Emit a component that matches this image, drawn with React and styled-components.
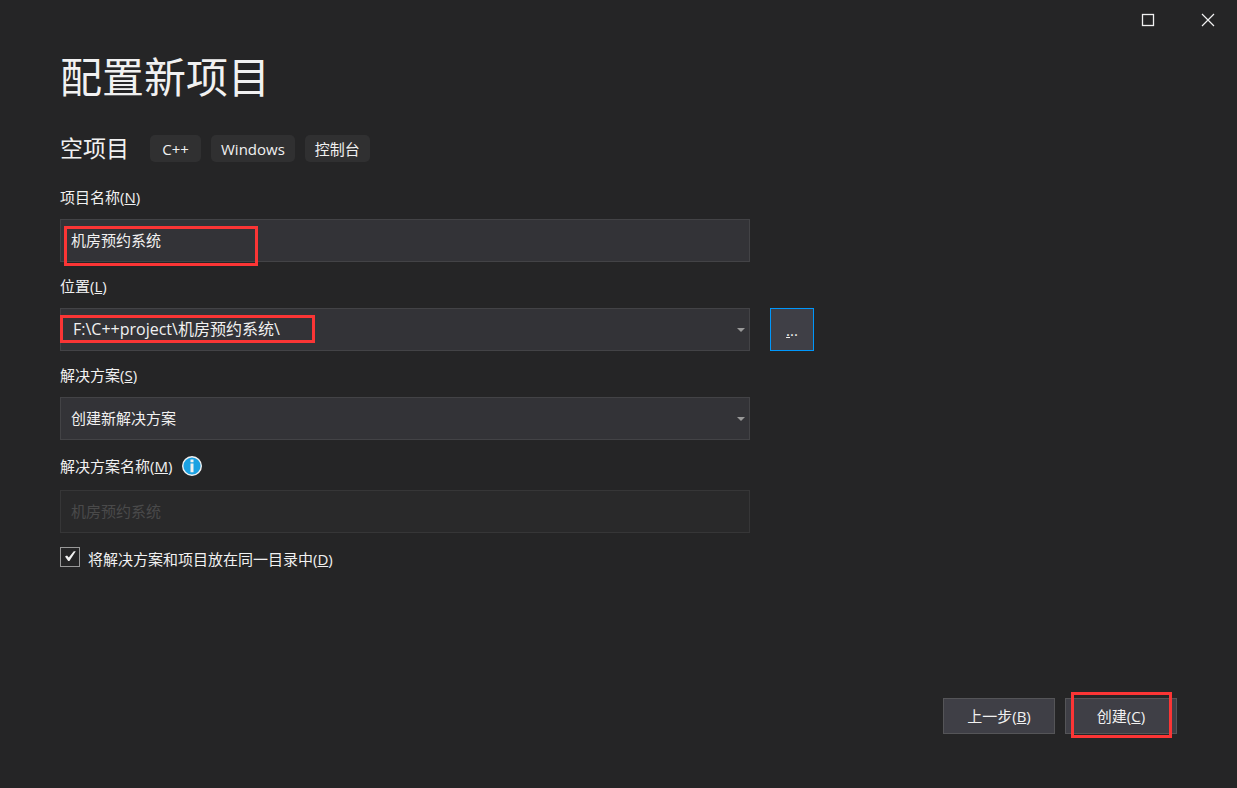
import React from "react";
import styled, { createGlobalStyle } from "styled-components";

const Global = createGlobalStyle`
  *, *::before, *::after { box-sizing: border-box; }
  body {
    margin: 0;
    background: #252526;
    color: #f1f1f1;
    font-family: "Open Sans", "Noto Sans CJK SC", sans-serif;
    font-size: 15px;
    line-height: 20px;
  }
  button, input, select { font: inherit; color: inherit; margin: 0; }
`;

const Dialog = styled.div`
  min-height: 100vh;
  display: flex;
  flex-direction: column;
`;

const TitleBar = styled.header`
  display: flex;
  justify-content: flex-end;
  height: 40px;
`;

const WindowButton = styled.button`
  display: grid;
  place-items: center;
  width: 60px;
  padding: 0 0 0 2px;
  border: 0;
  background: none;
`;

const Content = styled.main`
  flex: 1;
  padding: 6px 60px 0;
`;

const Title = styled.h1`
  margin: 0;
  font-size: 42px;
  line-height: 62px;
  font-weight: 400;
`;

const Template = styled.div`
  display: flex;
  align-items: center;
  gap: 10px;
  margin-top: 23px;
`;

const TemplateName = styled.h2`
  margin: 0 11px 0 0;
  font-size: 23px;
  line-height: 34px;
  font-weight: 400;
`;

const Tag = styled.span`
  min-width: 51px;
  padding: 4px 10px 3px;
  border-radius: 5px;
  background: #303031;
  text-align: center;
`;

const Form = styled.form`
  display: flex;
  flex-direction: column;
  margin-top: 22px;
`;

const Field = styled.div`
  display: flex;
  flex-direction: column;
  gap: 12px;
  margin-bottom: 14px;
`;

const LabelRow = styled.div`
  display: flex;
  align-items: center;
  gap: 10px;
  height: 24px;
`;

const Controls = styled.div`
  display: flex;
  gap: 20px;
`;

const Box = styled.div`
  position: relative;
  flex: 0 1 690px;
`;

const TextInput = styled.input`
  display: block;
  width: 100%;
  height: 43px;
  padding: 0 10px 2px;
  border: 1px solid #434346;
  border-radius: 0;
  background: #333337;
  &:disabled {
    border-color: #363637;
    background: #29292a;
    color: #4a4a4a;
  }
`;

const Select = styled.select`
  display: block;
  width: 100%;
  height: 43px;
  padding: 0 30px 2px ${(p) => (p.$path ? 12 : 10)}px;
  border: 1px solid #434346;
  border-radius: 0;
  background: #333337;
  font-size: ${(p) => (p.$path ? 16 : 15)}px;
  appearance: none;
`;

const Arrow = styled.svg`
  position: absolute;
  top: 20px;
  right: 5px;
  pointer-events: none;
`;

const Button = styled.button`
  width: ${(p) => p.$width}px;
  height: ${(p) => p.$height}px;
  padding: 0;
  border: 1px solid ${(p) => (p.$focused ? "#0097fb" : "#555558")};
  background: #3f3f46;
`;

const CheckRow = styled.div`
  display: flex;
  align-items: center;
  gap: 8px;
`;

const CheckBoxWrap = styled.span`
  position: relative;
  display: flex;
  margin-bottom: 4px;
  input:not(:checked) + svg { display: none; }
`;

const Checkbox = styled.input`
  appearance: none;
  width: 20px;
  height: 20px;
  border: 1px solid #999999;
  background: #252526;
`;

const CheckMark = styled.svg`
  position: absolute;
  inset: 0;
  pointer-events: none;
`;

const Footer = styled.footer`
  display: flex;
  justify-content: flex-end;
  gap: 10px;
  padding: 0 60px 54px;
`;

const Anchor = styled.div`
  position: relative;
  display: flex;
`;

const Highlight = styled.span`
  position: absolute;
  top: ${(p) => p.$top}px;
  left: ${(p) => p.$left}px;
  width: ${(p) => p.$width}px;
  height: ${(p) => p.$height}px;
  border: 3px solid #fb3535;
  pointer-events: none;
`;

const DropArrow = () => (
  <Arrow width="8" height="4" viewBox="0 0 8 4" aria-hidden="true">
    <path d="M0 0h8L4 4z" fill="#999999" />
  </Arrow>
);

export default function App() {
  return (
    <Dialog>
      <Global />
      <TitleBar>
        <WindowButton type="button" aria-label="最大化">
          <svg width="14" height="14" viewBox="0 0 14 14">
            <rect x="1.5" y="1.5" width="11" height="11" fill="none" stroke="#f1f1f1" strokeWidth="1.3" />
          </svg>
        </WindowButton>
        <WindowButton type="button" aria-label="关闭">
          <svg width="14" height="14" viewBox="0 0 14 14">
            <path d="M1 1l12 12M13 1L1 13" fill="none" stroke="#f1f1f1" strokeWidth="1.2" />
          </svg>
        </WindowButton>
      </TitleBar>

      <Content>
        <Title>配置新项目</Title>
        <Template>
          <TemplateName>空项目</TemplateName>
          <Tag>C++</Tag>
          <Tag>Windows</Tag>
          <Tag>控制台</Tag>
        </Template>

        <Form id="project" onSubmit={(e) => e.preventDefault()}>
          <Field>
            <label htmlFor="name">项目名称(<u>N</u>)</label>
            <Controls>
              <Box>
                <TextInput id="name" defaultValue="机房预约系统" />
                <Highlight $top={7} $left={4} $width={194} $height={40} />
              </Box>
            </Controls>
          </Field>
          <Field>
            <label htmlFor="location">位置(<u>L</u>)</label>
            <Controls>
              <Box>
                <Select id="location" $path>
                  <option>F:\C++project\机房预约系统\</option>
                </Select>
                <DropArrow />
                <Highlight $top={7} $left={0} $width={255} $height={28} />
              </Box>
              <Button type="button" $width={44} $height={43} $focused>
                <u>.</u>..
              </Button>
            </Controls>
          </Field>
          <Field>
            <label htmlFor="solution">解决方案(<u>S</u>)</label>
            <Controls>
              <Box>
                <Select id="solution">
                  <option>创建新解决方案</option>
                </Select>
                <DropArrow />
              </Box>
            </Controls>
          </Field>
          <Field>
            <LabelRow>
              <label htmlFor="solution-name">解决方案名称(<u>M</u>)</label>
              <svg width="20" height="20" viewBox="0 0 20 20" aria-hidden="true">
                <circle cx="10" cy="10" r="9.3" fill="#1ba1e2" stroke="#f1f1f1" strokeWidth="1.4" />
                <path d="M8.5 3.6h3v2.6h-3zM8.5 7.4h3v8.8h-3z" fill="#f1f1f1" />
              </svg>
            </LabelRow>
            <Controls>
              <Box>
                <TextInput id="solution-name" defaultValue="机房预约系统" disabled />
              </Box>
            </Controls>
          </Field>
          <CheckRow>
            <CheckBoxWrap>
              <Checkbox type="checkbox" id="same-dir" defaultChecked />
              <CheckMark width="20" height="20" viewBox="0 0 20 20" aria-hidden="true">
                <path d="M5 9.6l2-1.2 1.8 2.2 5-6.4h2L9.4 14H8.2z" fill="#f1f1f1" />
              </CheckMark>
            </CheckBoxWrap>
            <label htmlFor="same-dir">将解决方案和项目放在同一目录中(<u>D</u>)</label>
          </CheckRow>
        </Form>
      </Content>

      <Footer>
        <Button type="button" $width={112} $height={36}>上一步(<u>B</u>)</Button>
        <Anchor>
          <Button type="submit" form="project" $width={112} $height={36}>创建(<u>C</u>)</Button>
          <Highlight $top={-6} $left={6} $width={101} $height={46} />
        </Anchor>
      </Footer>
    </Dialog>
  );
}
